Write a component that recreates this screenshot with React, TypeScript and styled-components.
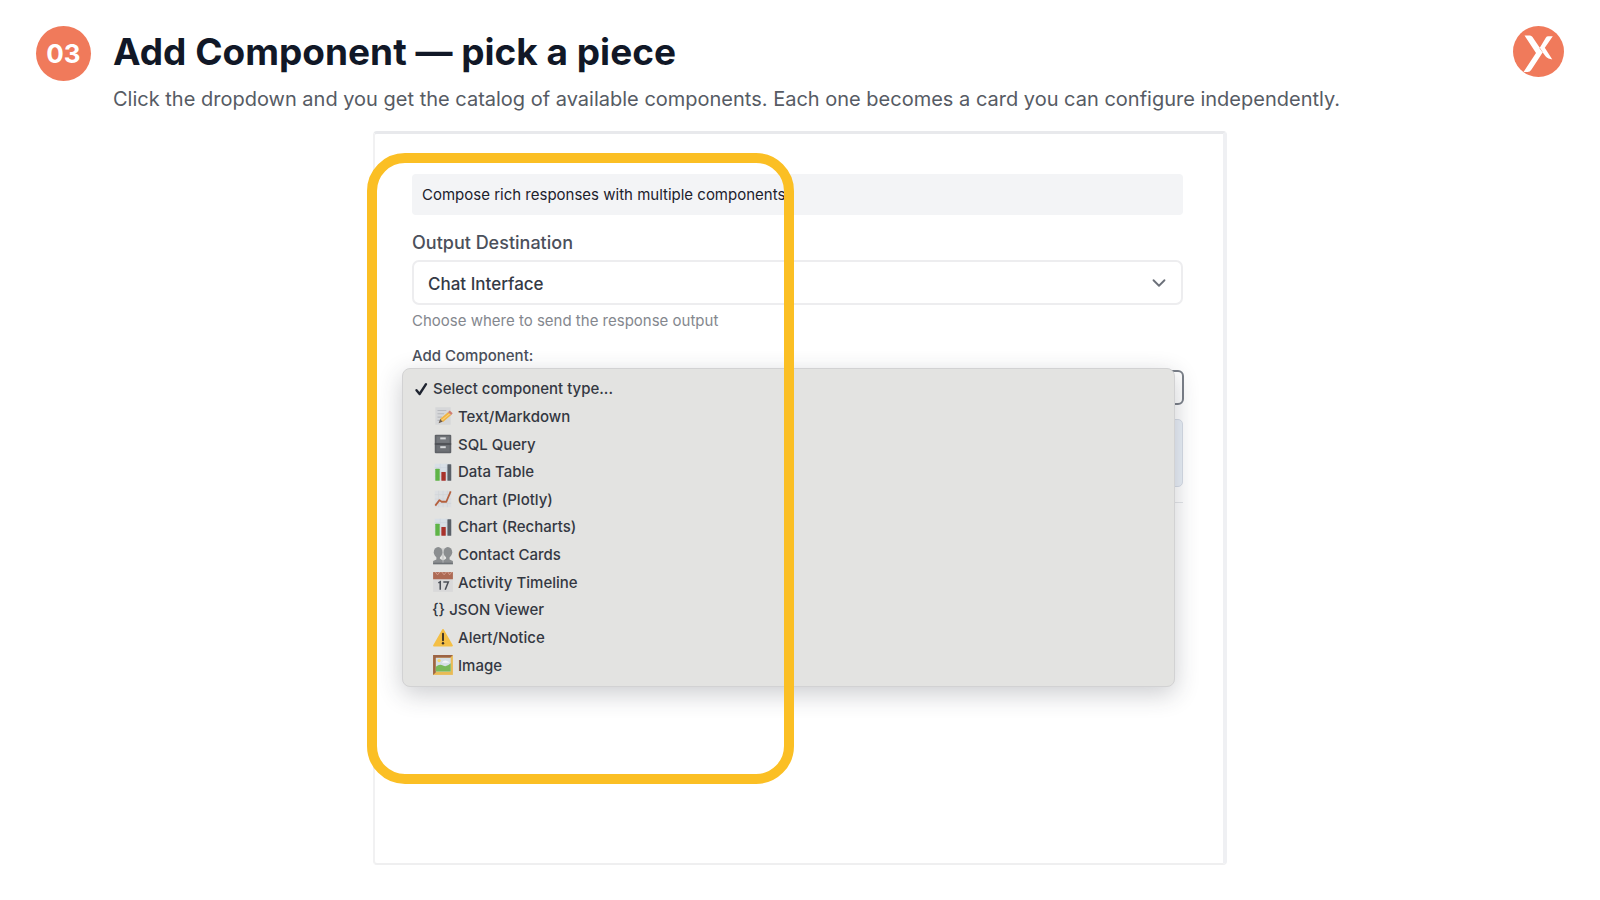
import React from "react";
import styled, { createGlobalStyle } from "styled-components";
import { ChevronDown } from "lucide-react";

const GlobalStyle = createGlobalStyle`
  *, *::before, *::after { box-sizing: border-box; }
  body {
    margin: 0;
    background: #ffffff;
    font-family: Inter, "Liberation Sans", sans-serif;
    color: #374151;
  }
`;

const Slide = styled.main`
  display: flex;
  flex-direction: column;
  align-items: center;
  gap: 18px;
  min-height: 100vh;
  padding: 26px 36px 35px;
`;

const Header = styled.header`
  display: flex;
  align-items: flex-start;
  gap: 22px;
  width: 100%;
`;

const StepBadge = styled.span`
  display: flex;
  align-items: center;
  justify-content: center;
  flex: none;
  width: 55px;
  height: 55px;
  border-radius: 50%;
  background: #f07a5b;
  color: #ffffff;
  font-size: 26px;
  font-weight: 700;
`;

const Heading = styled.div`
  display: flex;
  flex-direction: column;
  gap: 7px;
  flex: 1;
  min-width: 0;
`;

const Title = styled.h1`
  margin: 0;
  font-size: 37px;
  line-height: 52px;
  font-weight: 700;
  color: #111827;
`;

const Subtitle = styled.p`
  margin: 0;
  font-size: 20px;
  line-height: 28px;
  color: #565b64;
`;

const Logo = styled.svg`
  flex: none;
  width: 51px;
  height: 51px;
`;

const Frame = styled.section`
  position: relative;
  flex: 1;
  width: 100%;
  max-width: 854px;
  padding: 40px 40px 40px 37px;
  border-style: solid;
  border-width: 3px 4px 2px 2px;
  border-color: #e8e9ec #eff0f3 #efeff0 #f1f1f2;
  border-radius: 4px;
`;

const Form = styled.form`
  display: flex;
  flex-direction: column;
`;

const Banner = styled.p`
  margin: 0 0 16px;
  padding: 0 10px;
  border-radius: 4px;
  background: #f3f4f6;
  font-size: 15px;
  line-height: 41px;
  font-weight: 400;
  color: #1c212c;
`;

const Label = styled.label<{ $small?: boolean }>`
  margin-bottom: ${(p) => (p.$small ? 4 : 5)}px;
  font-size: ${(p) => (p.$small ? 15 : 18)}px;
  line-height: ${(p) => (p.$small ? 20 : 24)}px;
  font-weight: 500;
  color: #4b505b;
`;

const SelectWrap = styled.div`
  display: grid;
  align-items: center;

  > * {
    grid-area: 1 / 1;
  }

  svg {
    justify-self: end;
    margin-right: 13px;
    pointer-events: none;
  }
`;

const Select = styled.select`
  appearance: none;
  width: 100%;
  height: 45px;
  padding: 2px 14px 0;
  border: 2px solid #ededef;
  border-radius: 7px;
  background: #ffffff;
  font-family: inherit;
  font-size: 17px;
  font-weight: 500;
  color: #353a45;
`;

const Hint = styled.p`
  margin: 6px 0 15px;
  font-size: 15px;
  line-height: 20px;
  color: #84878e;
`;

const Picker = styled.div`
  position: relative;
  display: flex;
  flex-direction: column;
`;

const TypeSelect = styled.select`
  appearance: none;
  height: 35px;
  margin-right: -1px;
  border: 2px solid #7b8089;
  border-radius: 6px;
  background: #ffffff;
`;

const Placeholder = styled.div`
  height: 68px;
  margin: 14px 0 15px;
  border: 1px solid #d6dce6;
  border-radius: 5px;
  background: #e9eff7;
`;

const Divider = styled.hr`
  width: 100%;
  margin: 0;
  border: 0;
  border-top: 1px solid #e4e6e9;
`;

const Menu = styled.div`
  position: absolute;
  top: -2px;
  left: -10px;
  right: 8px;
  display: grid;
  grid-auto-rows: 1fr;
  height: 319px;
  padding: 6px 0 7px;
  border: 1px solid #d2d2d3;
  border-radius: 8px;
  background: #e3e3e1;
  box-shadow: 0 7px 24px rgba(40, 45, 60, 0.24);
`;

const Option = styled.button<{ $current?: boolean }>`
  display: flex;
  align-items: center;
  gap: 4px;
  padding: 0 12px 0 ${(p) => (p.$current ? 11 : 29)}px;
  border: 0;
  background: none;
  font-family: inherit;
  font-size: 15px;
  font-weight: 500;
  color: #343842;
  text-align: left;

  svg {
    flex: none;
  }
`;

const Highlight = styled.div`
  position: absolute;
  top: 19px;
  bottom: 79px;
  left: -8px;
  width: 50%;
  min-width: 427px;
  border: 10px solid #fbbf24;
  border-radius: 38px;
  pointer-events: none;
`;

const Glyph = ({ children }: { children: React.ReactNode }) => (
  <svg width="22" height="22" viewBox="0 0 20 20" aria-hidden="true">
    {children}
  </svg>
);

const CheckIcon = () => (
  <svg width="15" height="14" viewBox="0 0 15 14" aria-hidden="true">
    <path d="M2.5 8.2 5.6 12 12 2.2" fill="none" stroke="#1f2430" strokeWidth="2.4" strokeLinecap="round" strokeLinejoin="round" />
  </svg>
);

const MemoIcon = () => (
  <Glyph>
    <path d="M3 2h14v16H3z" fill="#d6d7d9" />
    <path d="M5 5h8M5 8h6M5 11h4M5 14h3" stroke="#b7b9bd" strokeWidth="1" />
    <path d="M6 16.500 7.500 12.500 10 15z" fill="#6b5b4c" />
    <path d="M7.500 12.500 14.500 6.500 17.500 9 10 15.400z" fill="#efb343" />
    <path d="M8.800 14 16 8" stroke="#fbd27a" strokeWidth="1" />
    <path d="m14.500 6.500 1.700-1.400 2.600 2.400L17.500 9z" fill="#cf7f72" />
  </Glyph>
);

const CabinetIcon = () => (
  <Glyph>
    <rect x="2.500" y="1.500" width="15" height="17" rx="1" fill="#5f6267" />
    <rect x="4" y="3" width="12" height="6" fill="#75787d" />
    <rect x="4" y="11" width="12" height="6" fill="#6d7075" />
    <path d="M2.500 10h15" stroke="#45484d" strokeWidth="1" />
    <rect x="7.500" y="4" width="5" height="1.800" fill="#d6d8da" />
    <rect x="7.500" y="12" width="5" height="1.800" fill="#d6d8da" />
  </Glyph>
);

const BarsIcon = () => (
  <Glyph>
    <rect x="2.500" y="2.500" width="15" height="15" fill="#d8dfe6" />
    <path d="M2.500 6h15M2.500 10h15M2.500 14h15M7.500 2.500v15M13 2.500v15" stroke="#ccd5de" strokeWidth="0.600" />
    <rect x="3" y="7" width="4" height="11" rx="0.500" fill="#5fb446" />
    <rect x="8.500" y="10" width="4" height="8" rx="0.500" fill="#a8322c" />
    <rect x="14" y="3" width="3.500" height="15" rx="0.500" fill="#5a6068" />
  </Glyph>
);

const TrendIcon = () => (
  <Glyph>
    <rect x="2.500" y="2.500" width="15" height="15" fill="#dcdee1" />
    <path d="M2.500 6h15M2.500 10h15M2.500 14h15M6 2.500v15M10 2.500v15M14 2.500v15" stroke="#cfd2d7" strokeWidth="0.600" />
    <path d="m3 16 3.800-5 2 1.500h4.200L17 3" fill="none" stroke="#b5613f" strokeWidth="1.600" strokeLinejoin="round" />
  </Glyph>
);

const PeopleIcon = () => (
  <Glyph>
    <g fill="#8b8e90">
      <ellipse cx="5.600" cy="7.500" rx="4" ry="4.800" />
      <ellipse cx="14.400" cy="7.500" rx="4" ry="4.800" />
      <path d="M4 11h3.200v2.500L10 15v3H1v-2.500L4 14zM12.800 11H16v3l3 1.500V18h-9v-3l2.800-1.500z" />
    </g>
    <path d="M1 17h18v1.500H1z" fill="#6e7276" />
    <path d="M10 4v13" stroke="#b5b7b8" strokeWidth="0.800" />
  </Glyph>
);

const CalendarIcon = () => (
  <Glyph>
    <rect x="1" y="1" width="18" height="18" fill="#d9d9da" />
    <rect x="1" y="1" width="18" height="6.500" fill="#ad6a54" />
    <path d="M3 1 5 3.500 7 1M9 1l2 2.500L13 1M14.500 1l1.500 2.500L18 1" fill="none" stroke="#d7a394" strokeWidth="0.800" />
    <path d="M5.800 10.800 7.500 9.800V17M10.300 10h4.500L12 17" fill="none" stroke="#4b4f57" strokeWidth="1.400" />
  </Glyph>
);

const WarningIcon = () => (
  <Glyph>
    <path d="M10 2.500 18.300 17H1.700z" fill="#f4bf45" stroke="#f4bf45" strokeWidth="1.400" strokeLinejoin="round" />
    <path d="M10 6v6" stroke="#3a3024" strokeWidth="1.700" strokeLinecap="round" />
    <circle cx="10" cy="14.800" r="1.100" fill="#3a3024" />
  </Glyph>
);

const PictureIcon = () => (
  <Glyph>
    <rect x="1" y="1" width="18" height="18" fill="#e9bb55" />
    <path d="M1 1h18l-2.500 2.500h-13V16.500L1 19z" fill="#9c6445" />
    <rect x="3.500" y="3.500" width="13.500" height="12.500" fill="#d5dfe4" />
    <path d="M3.500 11.500Q7 8.500 10 10.500T17 8.500V16H3.500z" fill="#79b958" />
    <circle cx="6.500" cy="6" r="1.500" fill="#f7d566" />
    <path d="M9 8q2-3 5-1.500L16 8z" fill="#f4f5f6" />
  </Glyph>
);

const componentTypes: { label: string; icon?: React.ReactNode }[] = [
  { label: "Text/Markdown", icon: <MemoIcon /> },
  { label: "SQL Query", icon: <CabinetIcon /> },
  { label: "Data Table", icon: <BarsIcon /> },
  { label: "Chart (Plotly)", icon: <TrendIcon /> },
  { label: "Chart (Recharts)", icon: <BarsIcon /> },
  { label: "Contact Cards", icon: <PeopleIcon /> },
  { label: "Activity Timeline", icon: <CalendarIcon /> },
  { label: "{} JSON Viewer" },
  { label: "Alert/Notice", icon: <WarningIcon /> },
  { label: "Image", icon: <PictureIcon /> },
];

export default function App() {
  return (
    <>
      <GlobalStyle />
      <Slide>
        <Header>
          <StepBadge>03</StepBadge>
          <Heading>
            <Title>Add Component — pick a piece</Title>
            <Subtitle>
              Click the dropdown and you get the catalog of available components. Each one becomes a card you can configure
              independently.
            </Subtitle>
          </Heading>
          <Logo viewBox="0 0 51 51" role="img" aria-label="Logo">
            <circle cx="25.500" cy="25.500" r="25.500" fill="#f07a5b" />
            <path
              d="M11.500 9.500h5.500q1.500 0 2.500 1.500l10.300 15.300L18.500 43.500q-1.500 2.500-4 2.500H10.500L23 27zM39.800 10.300h-4.500q-1.600 0-2.500 1.400l-6.300 10.600 6 7.900q1.200 1.600 3 2.200l3.800 1.100-7.500-11.700z"
              fill="#ffffff"
            />
          </Logo>
        </Header>

        <Frame>
          <Form>
            <Banner>Compose rich responses with multiple components.</Banner>
            <Label htmlFor="destination">Output Destination</Label>
            <SelectWrap>
              <Select id="destination">
                <option>Chat Interface</option>
              </Select>
              <ChevronDown size={22} color="#6b7079" strokeWidth={2} aria-hidden="true" />
            </SelectWrap>
            <Hint>Choose where to send the response output</Hint>
            <Label htmlFor="component-type" $small>
              Add Component:
            </Label>
            <Picker>
              <TypeSelect id="component-type" />
              <Placeholder />
              <Divider />
              <Menu role="listbox" aria-label="Component type">
                <Option type="button" role="option" aria-selected="true" $current>
                  <CheckIcon />
                  Select component type...
                </Option>
                {componentTypes.map(({ label, icon }) => (
                  <Option key={label} type="button" role="option" aria-selected="false">
                    {icon}
                    {label}
                  </Option>
                ))}
              </Menu>
            </Picker>
          </Form>
          <Highlight />
        </Frame>
      </Slide>
    </>
  );
}
